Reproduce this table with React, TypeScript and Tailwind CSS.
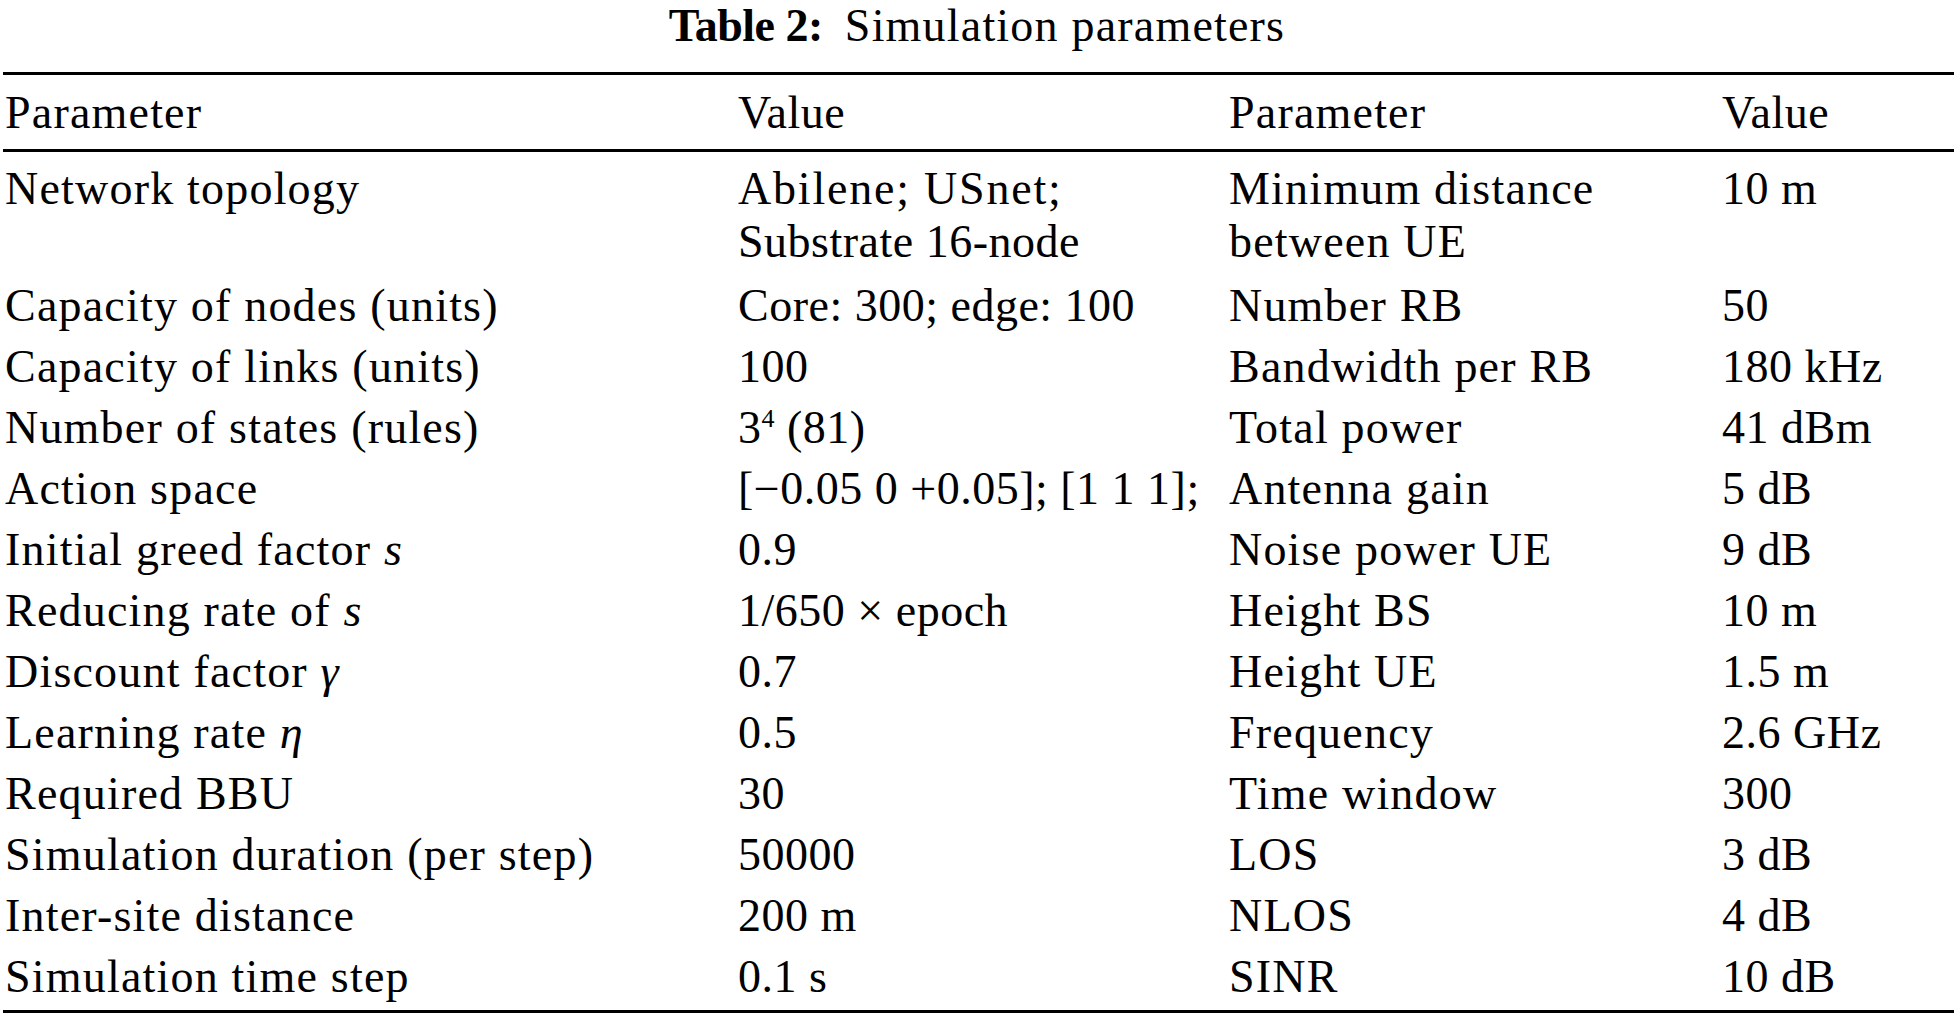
import React from "react";

type Cell = React.ReactNode;

const rows: { cells: Cell[]; extra?: boolean }[] = [
  {
    cells: [
      "Network topology",
      <>
        <span className="tracking-[1.8px]">Abilene; USnet;</span>
        <br />
        Substrate 16-node
      </>,
      <>
        Minimum distance
        <br />
        between UE
      </>,
      "10 m",
    ],
    extra: true,
  },
  { cells: ["Capacity of nodes (units)", "Core: 300; edge: 100", "Number RB", "50"] },
  { cells: ["Capacity of links (units)", "100", "Bandwidth per RB", "180 kHz"] },
  {
    cells: [
      "Number of states (rules)",
      <>
        3<span className="text-[26px] leading-none align-[16px]">4</span> (81)
      </>,
      "Total power",
      "41 dBm",
    ],
  },
  { cells: ["Action space", "[\u22120.05 0 +0.05]; [1 1 1];", "Antenna gain", "5 dB"] },
  {
    cells: [
      <>
        Initial greed factor <i>s</i>
      </>,
      "0.9",
      "Noise power UE",
      "9 dB",
    ],
  },
  {
    cells: [
      <>
        Reducing rate of <i>s</i>
      </>,
      "1/650 \u00d7 epoch",
      "Height BS",
      "10 m",
    ],
  },
  {
    cells: [
      <>
        Discount factor <i>γ</i>
      </>,
      "0.7",
      "Height UE",
      "1.5 m",
    ],
  },
  {
    cells: [
      <>
        Learning rate <i>η</i>
      </>,
      "0.5",
      "Frequency",
      "2.6 GHz",
    ],
  },
  { cells: ["Required BBU", "30", "Time window", "300"] },
  { cells: ["Simulation duration (per step)", "50000", "LOS", "3 dB"] },
  { cells: ["Inter-site distance", "200 m", "NLOS", "4 dB"] },
  { cells: ["Simulation time step", "0.1 s", "SINR", "10 dB"] },
];

const colTrack = ["tracking-[1.2px]", "tracking-[0.5px]", "tracking-[1.2px]", "tracking-[0.5px]"];

function Rule() {
  return <div className="ml-[3px] h-[3px] bg-black" />;
}

export default function App() {
  return (
    <div className="w-[1954px] h-[1017px] bg-white text-black font-['Liberation_Serif',serif] text-[46px] overflow-hidden">
      <div className="h-[72px] flex justify-center leading-[51px]">
        <div className="whitespace-nowrap">
          <span className="font-bold tracking-[-0.5px]">Table 2:</span>
          <span className="ml-[22px] tracking-[1.2px]">Simulation parameters</span>
        </div>
      </div>
      <Rule />
      <div className="ml-[3px] pl-[2px] pt-[11px] pb-[10px] grid grid-cols-[733px_491px_493px_1fr] leading-[53px]">
        <div className={colTrack[0]}>Parameter</div>
        <div className={colTrack[1]}>Value</div>
        <div className={colTrack[2]}>Parameter</div>
        <div className={colTrack[3]}>Value</div>
      </div>
      <Rule />
      <div className="ml-[3px] pl-[2px] pt-[6px] pb-[3px] flex flex-col leading-[53px]">
        {rows.map((r, i) => (
          <div
            key={i}
            className={
              "grid grid-cols-[733px_491px_493px_1fr] pt-[4px] " +
              (r.extra ? "pb-[7px]" : "pb-[4px]")
            }
          >
            {r.cells.map((c, j) => (
              <div key={j} className={"whitespace-nowrap " + colTrack[j]}>
                {c}
              </div>
            ))}
          </div>
        ))}
      </div>
      <Rule />
    </div>
  );
}
